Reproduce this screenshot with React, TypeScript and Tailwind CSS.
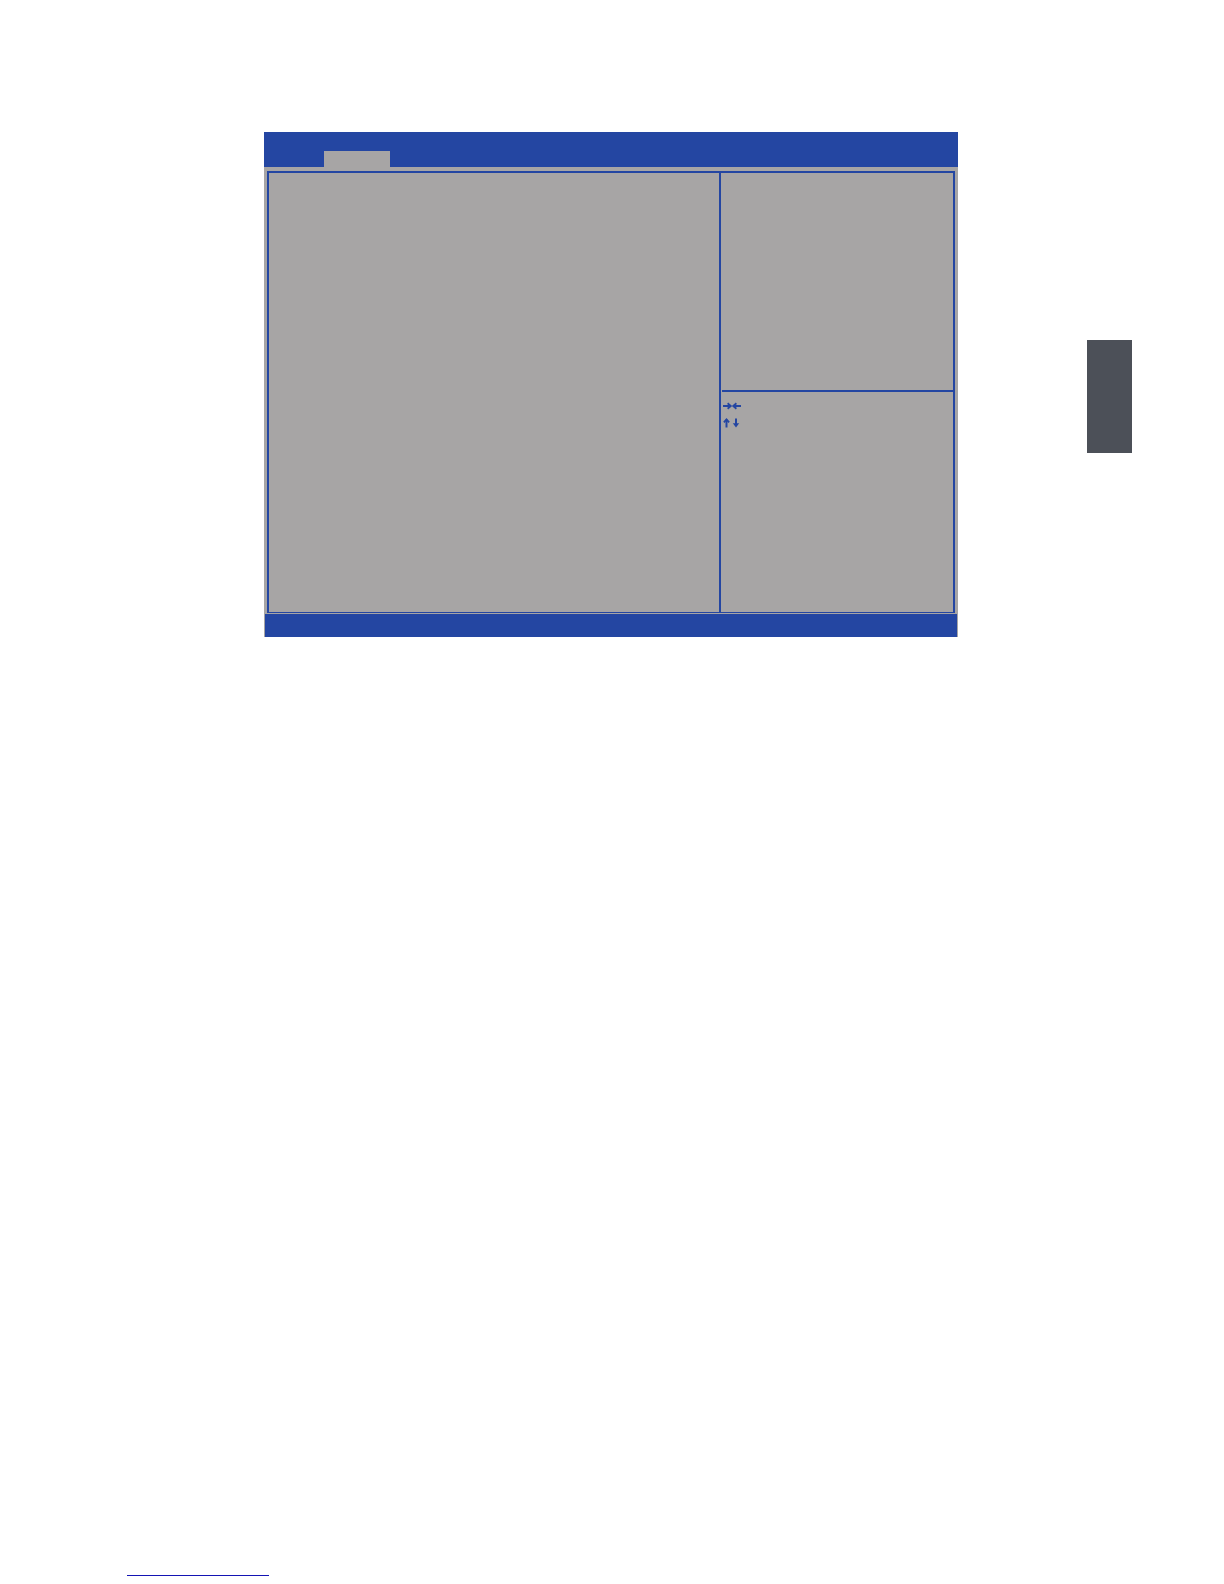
function HorizontalArrows() {
  return (
    <svg className="block h-2 w-[18px]" viewBox="0 0 18 8" fill="none" stroke="currentColor" strokeWidth={2}>
      <path d="M0 4h8" />
      <path d="M4.6 1.2 7.8 4 4.6 6.8" strokeWidth={1.8} />
      <path d="M18 4h-8" />
      <path d="M13.4 1.2 10.2 4l3.2 2.8" strokeWidth={1.8} />
    </svg>
  );
}

function VerticalArrows() {
  return (
    <svg className="block h-[10px] w-[18px]" viewBox="0 0 18 10" fill="none" stroke="currentColor" strokeWidth={2}>
      <path d="M3.5 9.5V1.5" />
      <path d="M.9 4.4 3.5 1.4l2.6 3" strokeWidth={1.8} />
      <path d="M13 .5V8" />
      <path d="M9.8 5.2 13 9.6l3.2-4.4Z" fill="currentColor" stroke="none" />
    </svg>
  );
}

function SetupPanel() {
  return (
    <section className="flex flex-col bg-[#a7a5a5] text-[#2446a2]">
      {/* Menu bar with the selected tab */}
      <header className="flex h-[35px] items-end bg-[#2446a2]">
        <div className="ml-[60px] h-4 w-[66px] bg-[#a7a5a5]" />
      </header>

      <div className="mx-[3px] mt-1 mb-px flex h-[442px] border-2 border-b border-[#2446a2]">
        <div className="flex-[450]" />
        <aside className="flex flex-[232] flex-col border-l-2 border-[#2446a2]">
          <div className="h-[217px]" />
          <div className="ml-px flex flex-1 flex-col gap-2 border-t-2 border-[#2446a2] pt-[10px] pl-px">
            <HorizontalArrows />
            <VerticalArrows />
          </div>
        </aside>
      </div>

      <footer className="mx-px h-[23px] bg-[#2446a2]" />
    </section>
  );
}

export default function App() {
  return (
    <div className="flex min-h-screen flex-col bg-white pt-[132px] pb-2">
      <main className="grid grid-cols-[264fr_694fr_129fr_45fr_92fr]">
        <div className="col-start-2">
          <SetupPanel />
        </div>
        {/* Chapter marker in the page margin */}
        <div className="col-start-4 mt-52 h-[113px] bg-[#4c5058]" />
      </main>

      <div className="mt-auto ml-[127px] h-px w-[142px] bg-[#1414b4]" />
    </div>
  );
}
